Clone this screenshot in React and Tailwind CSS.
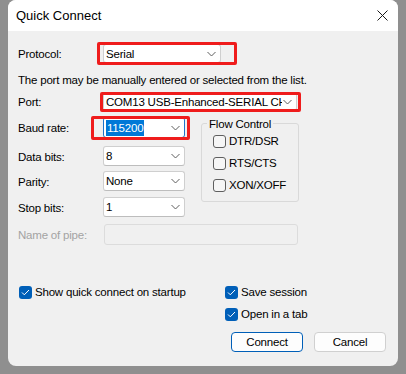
function Chevron() {
  return (
    <svg width="9" height="5" viewBox="0 0 9 5" className="absolute right-[4px] top-1/2 -translate-y-1/2">
      <polyline points="0.5,0.5 4.5,4.5 8.5,0.5" fill="none" stroke="#5f5f5f" strokeWidth="1" />
    </svg>
  );
}

function Combo({ className, focused, children }) {
  return (
    <div
      className={`relative flex items-center overflow-hidden rounded-[3px] border bg-white pl-[2px] ${
        focused ? "border-[#1e73c9]" : "border-[#cfcfcf] border-b-[#bdbdbd]"
      } ${className}`}
    >
      {children}
      <Chevron />
    </div>
  );
}

function Check({ checked }) {
  if (checked) {
    return (
      <span className="flex h-[13px] w-[13px] shrink-0 items-center justify-center rounded-[3px] bg-[#005fb8]">
        <svg width="9" height="7" viewBox="0 0 9 7">
          <polyline points="1,3.5 3.3,5.8 8,1" fill="none" stroke="white" strokeWidth="1" />
        </svg>
      </span>
    );
  }
  return <span className="h-[13px] w-[13px] shrink-0 rounded-[3px] border border-[#5f5f5f] bg-[#f6f6f6]" />;
}

function Row({ label, className, children, disabled }) {
  return (
    <div className={`flex items-center ${className}`}>
      <span className={`w-[85px] shrink-0 pt-[1px] ${disabled ? "text-[#a3a3a3]" : ""}`}>{label}</span>
      {children}
    </div>
  );
}

export default function App() {
  return (
    <div className="h-[374px] w-[406px] bg-[#8f8f8f] pl-[8px] font-['Liberation_Sans',Arial,sans-serif] text-[11.5px] leading-[16px] tracking-[-0.2px] text-black">
      <div className="relative flex h-[366px] w-[390px] flex-col overflow-hidden rounded-[8px] bg-[#f0f0f0]">
        {/* title bar */}
        <div className="flex h-[31px] items-center justify-between bg-white pl-[8px] pr-[10px]">
          <span className="pt-[1px] text-[13px] tracking-normal">Quick Connect</span>
          <svg width="11" height="11" viewBox="0 0 11 11">
            <path d="M0.5 0.5 L10.5 10.5 M10.5 0.5 L0.5 10.5" stroke="#1a1a1a" strokeWidth="1" />
          </svg>
        </div>

        <div className="flex flex-col pl-[10px]">
          <Row label="Protocol:" className="mt-[13px] h-[19px]">
            <Combo className="h-[19px] w-[118px]">Serial</Combo>
          </Row>

          <p className="mt-[9px] whitespace-nowrap">The port may be manually entered or selected from the list.</p>

          <Row label="Port:" className="mt-[4px] h-[19px]">
            <Combo className="h-[19px] w-[194px]">
              <span className="w-[176px] overflow-hidden whitespace-nowrap">COM13 USB-Enhanced-SERIAL CH91</span>
            </Combo>
          </Row>

          <div className="mt-[6px] flex">
            <div className="flex flex-col">
              <Row label="Baud rate:" className="h-[21px]">
                <Combo focused className="h-[21px] w-[82px]">
                  <span className="bg-[#0078d7] px-[1px] text-white">115200</span>
                </Combo>
              </Row>
              <Row label="Data bits:" className="mt-[8px] h-[20px]">
                <Combo className="h-[20px] w-[82px]">8</Combo>
              </Row>
              <Row label="Parity:" className="mt-[5px] h-[20px]">
                <Combo className="h-[20px] w-[82px]">None</Combo>
              </Row>
              <Row label="Stop bits:" className="mt-[6px] h-[20px]">
                <Combo className="h-[20px] w-[82px]">1</Combo>
              </Row>
            </div>

            <div className="relative ml-[16px] mt-[6px] flex h-[79px] w-[98px] flex-col rounded-[3px] border border-[#d9d9d9] pl-[11px] pt-[6px]">
              <span className="absolute -top-[8px] left-[5px] whitespace-nowrap bg-[#f0f0f0] px-[2px]">Flow Control</span>
              {["DTR/DSR", "RTS/CTS", "XON/XOFF"].map((t) => (
                <label key={t} className="flex h-[22px] items-center gap-[3px]">
                  <Check />
                  <span>{t}</span>
                </label>
              ))}
            </div>
          </div>

          <Row label="Name of pipe:" disabled className="mt-[7px] h-[21px]">
            <div className="ml-[1px] h-[21px] w-[194px] rounded-[3px] border border-[#dcdcdc] bg-[#f0f0f0]" />
          </Row>

          <div className="mt-[36px] flex">
            <div className="flex w-[207px] flex-col pl-[1px]">
              <label className="flex h-[22px] items-center gap-[3px] whitespace-nowrap">
                <Check checked />
                <span>Show quick connect on startup</span>
              </label>
            </div>
            <div className="flex flex-col">
              <label className="flex h-[22px] items-center gap-[3px]">
                <Check checked />
                <span>Save session</span>
              </label>
              <label className="flex h-[22px] items-center gap-[3px]">
                <Check checked />
                <span>Open in a tab</span>
              </label>
            </div>
          </div>

          <div className="mt-[7px] flex justify-end gap-[11px] pr-[12px]">
            <button className="h-[20px] w-[72px] rounded-[4px] border border-[#005fb8] bg-[#fdfdfd]">Connect</button>
            <button className="h-[20px] w-[72px] rounded-[4px] border border-[#d0d0d0] bg-[#fdfdfd]">Cancel</button>
          </div>
        </div>

        {/* red annotation boxes */}
        <div className="pointer-events-none absolute left-[89px] top-[42px] h-[23px] w-[140px] rounded-[2px] border-[3px] border-[#ef1c1c]" />
        <div className="pointer-events-none absolute left-[92px] top-[92px] h-[20px] w-[201px] rounded-[2px] border-[3px] border-[#ef1c1c]" />
        <div className="pointer-events-none absolute left-[83px] top-[116px] h-[24px] w-[99px] rounded-[2px] border-[3px] border-[#ef1c1c]" />
      </div>
    </div>
  );
}
